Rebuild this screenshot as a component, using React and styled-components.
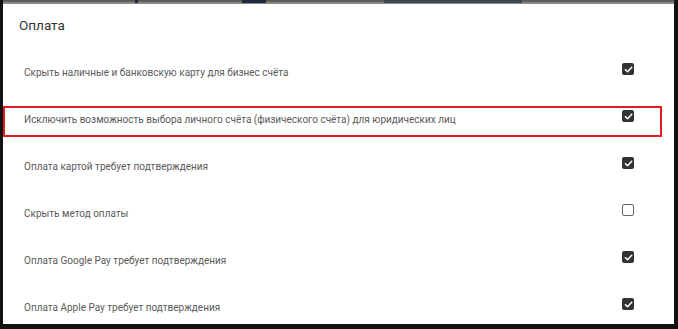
import React from 'react';
import styled, { createGlobalStyle } from 'styled-components';

const GlobalStyle = createGlobalStyle`
  html, body {
    margin: 0;
    padding: 0;
    background: #121212;
    font-family: Roboto, "Noto Sans", "Liberation Sans", sans-serif;
  }
`;

const options = [
  { label: 'Скрыть наличные и банковскую карту для бизнес счёта', checked: true },
  {
    label: 'Исключить возможность выбора личного счёта (физического счёта) для юридических лиц',
    checked: true,
    highlighted: true
  },
  { label: 'Оплата картой требует подтверждения', checked: true },
  { label: 'Скрыть метод оплаты', checked: false },
  { label: 'Оплата Google Pay требует подтверждения', checked: true },
  { label: 'Оплата Apple Pay требует подтверждения', checked: true }
];

const App = () => {
  return (
    <>
      <GlobalStyle />
      <Screen>
        <TopStrip>
          <StripMark $w={3} $left={132} />
          <StripMark $w={24} $left={104} />
          <StripMark $w={138} $left={118} $light />
        </TopStrip>
        <Panel>
          <Title>Оплата</Title>
          <List>
            {options.map((o) => (
              <Row key={o.label} $highlighted={o.highlighted}>
                <Label>{o.label}</Label>
                <Checkbox $checked={o.checked}>
                  {o.checked && (
                    <svg width="9" height="9" viewBox="0 0 10 10">
                      <path
                        d="M1.6 5.2 L4 7.5 L8.6 2.6"
                        fill="none"
                        stroke="#fff"
                        strokeWidth="1.7"
                        strokeLinecap="round"
                        strokeLinejoin="round"
                      />
                    </svg>
                  )}
                </Checkbox>
              </Row>
            ))}
          </List>
        </Panel>
      </Screen>
    </>
  );
};

export default App;

const Screen = styled.div`
  width: 678px;
  height: 329px;
  box-sizing: border-box;
  padding: 0 4px 5px 3px;
  display: flex;
  flex-direction: column;
  overflow: hidden;
`;

const TopStrip = styled.div`
  height: 4px;
  flex: none;
  display: flex;
  background: linear-gradient(#5c5c5c 0 60%, #8a8a8a 60% 100%);
`;

const StripMark = styled.div`
  width: ${(p) => p.$w}px;
  margin-left: ${(p) => p.$left}px;
  height: 3px;
  background: ${(p) => (p.$light ? '#3e4650' : '#1d2c3c')};
`;

const Panel = styled.div`
  flex: 1;
  background: #fff;
  padding-top: 13px;
  overflow: hidden;
`;

const Title = styled.div`
  padding-left: 16px;
  font-size: 13.5px;
  line-height: 17px;
  color: #333;
`;

const List = styled.div`
  margin-top: 25px;
  display: flex;
  flex-direction: column;
  gap: 16px;
`;

const Row = styled.div`
  width: 659px;
  height: 31px;
  box-sizing: border-box;
  border: 2px solid ${(p) => (p.$highlighted ? '#e01b22' : 'transparent')};
  padding: 0 26px 0 19px;
  display: flex;
  justify-content: space-between;
  align-items: flex-start;
`;

const Label = styled.span`
  margin-top: 5px;
  font-size: 10px;
  line-height: 13px;
  color: #5a5a5a;
`;

const Checkbox = styled.span`
  margin-top: 2px;
  width: 12px;
  height: 12px;
  box-sizing: border-box;
  border-radius: 2px;
  display: flex;
  align-items: center;
  justify-content: center;
  background: ${(p) => (p.$checked ? '#333' : '#fff')};
  border: ${(p) => (p.$checked ? 'none' : '1.5px solid #666')};
`;
